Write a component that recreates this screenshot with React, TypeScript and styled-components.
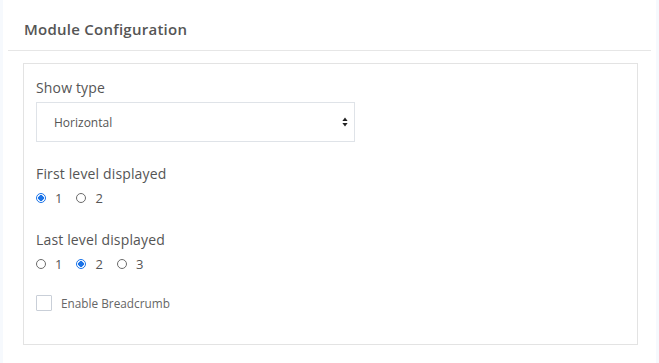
import React from "react";
import styled, { createGlobalStyle } from "styled-components";

const GlobalStyle = createGlobalStyle`
  html, body {
    margin: 0;
    padding: 0;
    background: #f6f9fd;
    font-family: "Open Sans", "Liberation Sans", sans-serif;
  }
`;

const Card = styled.section`
  margin: 0 3px;
  min-height: 363px;
  background: #ffffff;
  box-sizing: border-box;
`;

const Header = styled.header`
  margin: 0 5px;
  padding: 19px 16px 0;
  height: 51px;
  box-sizing: border-box;
  border-bottom: 1px solid #e6e6e6;
  h2 {
    margin: 0;
    font-size: 15px;
    line-height: 20px;
    font-weight: 600;
    letter-spacing: 0.25px;
    color: #555555;
  }
`;

const Body = styled.div`
  padding: 12px 18px 17px 20px;
`;

const Panel = styled.div`
  border: 1px solid #e3e3e3;
  padding: 14px 12px 30px;
  height: 282px;
  box-sizing: border-box;
`;

const Group = styled.div<{ gap?: number }>`
  margin-top: ${(p) => p.gap ?? 0}px;
`;

const Label = styled.div`
  font-size: 14px;
  line-height: 20px;
  letter-spacing: 0.15px;
  color: #555555;
`;

const SelectWrap = styled.div`
  position: relative;
  width: 319px;
  margin-top: 4px;
  select {
    appearance: none;
    width: 100%;
    height: 40px;
    box-sizing: border-box;
    border: 1px solid #dfe3e8;
    border-radius: 0;
    background: #fff;
    padding: 0 17px;
    font-family: inherit;
    font-size: 12px;
    color: #555555;
    outline: none;
  }
  svg {
    position: absolute;
    right: 7px;
    top: 15px;
    pointer-events: none;
  }
`;

const RadioRow = styled.div`
  display: flex;
  align-items: center;
  height: 20px;
  margin-top: 4px;
`;

const RadioOption = styled.label`
  display: flex;
  align-items: center;
  margin-right: 14px;
  font-size: 13px;
  color: #555555;
  input {
    appearance: none;
    margin: 0 9px 0 0;
    width: 10px;
    height: 10px;
    border-radius: 50%;
    border: 1px solid #6b6b6b;
    box-sizing: border-box;
    background: #fff;
  }
  input:checked {
    border-color: #1a73e8;
    background: radial-gradient(circle, #1a73e8 0 2.6px, #fff 3px);
  }
`;

const CheckRow = styled.label`
  display: flex;
  align-items: center;
  height: 20px;
  margin-top: 19px;
  font-size: 11.8px;
  color: #666666;
  input {
    appearance: none;
    margin: 0 9px 0 0;
    width: 16px;
    height: 16px;
    border: 1px solid #c9cfd8;
    border-radius: 1px;
    background: #fff;
    box-sizing: border-box;
  }
`;

function Radios({ name, values, checked }: { name: string; values: string[]; checked: string }) {
  return (
    <RadioRow>
      {values.map((v) => (
        <RadioOption key={v}>
          <input type="radio" name={name} defaultChecked={v === checked} />
          {v}
        </RadioOption>
      ))}
    </RadioRow>
  );
}

export default function App() {
  return (
    <>
      <GlobalStyle />
      <Card>
        <Header>
          <h2>Module Configuration</h2>
        </Header>
        <Body>
          <Panel>
            <Group>
              <Label>Show type</Label>
              <SelectWrap>
                <select defaultValue="horizontal">
                  <option value="horizontal">Horizontal</option>
                  <option value="vertical">Vertical</option>
                </select>
                <svg width="6" height="10" viewBox="0 0 6 10">
                  <path d="M3 0.5 L5.6 4 L0.4 4 Z" fill="#222" />
                  <path d="M3 9.5 L5.6 6 L0.4 6 Z" fill="#222" />
                </svg>
              </SelectWrap>
            </Group>
            <Group gap={22}>
              <Label>First level displayed</Label>
              <Radios name="first" values={["1", "2"]} checked="1" />
            </Group>
            <Group gap={22}>
              <Label>Last level displayed</Label>
              <Radios name="last" values={["1", "2", "3"]} checked="2" />
            </Group>
            <CheckRow>
              <input type="checkbox" />
              Enable Breadcrumb
            </CheckRow>
          </Panel>
        </Body>
      </Card>
    </>
  );
}
